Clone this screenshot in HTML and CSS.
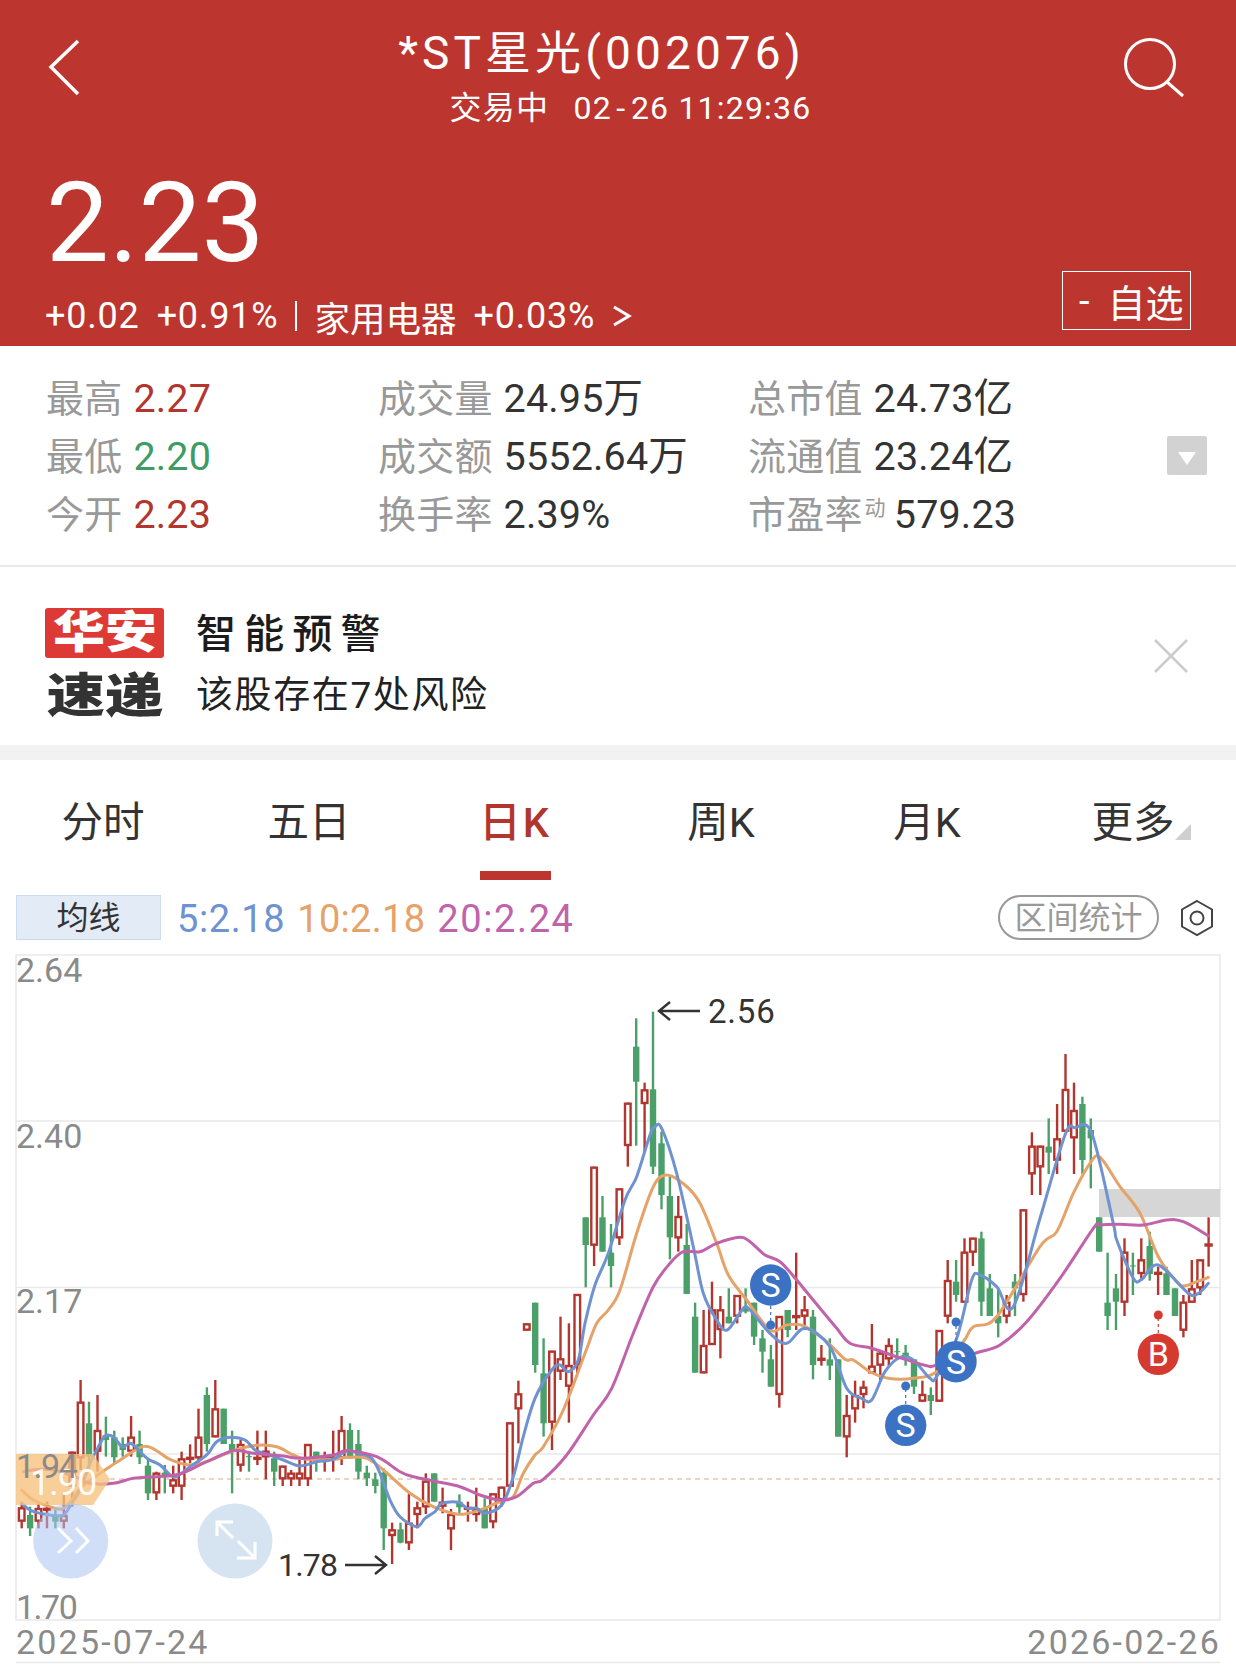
FILE: index.html
```html
<!DOCTYPE html>
<html lang="zh-CN">
<head>
<meta charset="utf-8">
<title>*ST星光(002076)</title>
<link rel="stylesheet" href="styles.css">
</head>
<body>
<main class="page">
  <header class="quote">
    <div class="nav">
      <svg class="nav-back" viewBox="0 0 40 60"><path d="M33 3 L6 29 L33 56"/></svg>
      <div class="nav-titles">
        <div class="stock-name">*ST星光(002076)</div>
        <div class="stock-status">交易中&nbsp;&nbsp;<span class="stock-time">02<span class="dash">-</span>26 11:29:36</span></div>
      </div>
      <svg class="nav-search" viewBox="0 0 72 64"><circle cx="31" cy="28" r="24.5"/><path d="M48 46 L64 60"/></svg>
    </div>
    <div class="price-row">
      <div class="price-block">
        <div class="price">2.23</div>
        <div class="change">
          <span>+0.02</span><span>+0.91%</span><span class="pipe"></span><span class="sector">家用电器</span><span>+0.03%</span>
          <svg class="change-more" viewBox="0 0 20 24"><path d="M2 3 L17 12 L2 21"/></svg>
        </div>
      </div>
      <button class="watch"><span class="watch-minus">-</span>自选</button>
    </div>
  </header>

  <section class="stats">
    <div class="stats-grid">
      <div class="stat"><span class="stat-label">最高</span><span class="up">2.27</span></div>
      <div class="stat"><span class="stat-label">成交量</span><span>24.95万</span></div>
      <div class="stat"><span class="stat-label">总市值</span><span>24.73亿</span></div>
      <div class="stat"><span class="stat-label">最低</span><span class="down">2.20</span></div>
      <div class="stat"><span class="stat-label">成交额</span><span>5552.64万</span></div>
      <div class="stat"><span class="stat-label">流通值</span><span>23.24亿</span></div>
      <div class="stat"><span class="stat-label">今开</span><span class="up">2.23</span></div>
      <div class="stat"><span class="stat-label">换手率</span><span>2.39%</span></div>
      <div class="stat"><span class="stat-label">市盈率<sup class="stat-sup">动</sup></span><span>579.23</span></div>
    </div>
    <div class="stats-toggle"><svg viewBox="0 0 40 39"><path d="M11 16 H29 L20 29 Z"/></svg></div>
  </section>

  <section class="alert">
    <div class="alert-logo">
      <div class="logo-top"><span class="logo-word">华安</span></div>
      <div class="logo-bottom"><span class="logo-word">速递</span></div>
    </div>
    <div class="alert-text">
      <div class="alert-title">智能预警</div>
      <div class="alert-body">该股存在7处风险</div>
    </div>
    <svg class="alert-close" viewBox="0 0 36 36"><path d="M2 2 L34 34 M34 2 L2 34"/></svg>
  </section>

  <div class="band"></div>

  <nav class="tabs">
    <div class="tab"><span class="tab-label">分时</span></div>
    <div class="tab"><span class="tab-label">五日</span></div>
    <div class="tab tab-active"><span class="tab-label">日K</span></div>
    <div class="tab"><span class="tab-label">周K</span></div>
    <div class="tab"><span class="tab-label">月K</span></div>
    <div class="tab"><span class="tab-label tab-more">更多</span></div>
  </nav>

  <div class="ma-row">
    <div class="ma-switch">均线</div>
    <div class="ma-legend">
      <span class="ma5">5:2.18</span><span class="ma10">10:2.18</span><span class="ma20">20:2.24</span>
    </div>
    <div class="range-pill">区间统计</div>
    <svg class="ma-gear" viewBox="0 0 34 38"><path d="M17 2 L32 10.5 V27.5 L17 36 L2 27.5 V10.5 Z"/><circle cx="17" cy="19" r="6.5"/></svg>
  </div>

  <svg id="kline" class="kline" viewBox="0 940 1236 724" width="1236" height="724">
    <path class="frame" d="M16 955 H1220 V1620 H16 Z M16 1121 H1220 M16 1287.5 H1220 M16 1454 H1220 M16 1662.5 H1220"/>
    <rect class="zone" x="1099" y="1189" width="121" height="28"/>
    <path class="prev-close" d="M110 1479 H1220"/>
    <g id="candles"></g>
    <g id="averages"></g>
    <path class="price-tag" d="M16 1454 H93 L110 1479.5 L93 1505 H16 Z"/>

    <g class="float-btn">
      <circle class="float-next" cx="70.7" cy="1541" r="37.5"/>
      <path d="M58 1528 L71 1541 L58 1553 M76 1528 L88 1541 L76 1553"/>
      <circle class="float-zoom" cx="235" cy="1541" r="37.5"/>
      <path d="M217 1536 V1522 H233 M217 1522 L233 1538 M255 1542 V1558 H237 M255 1558 L238 1541"/>
    </g>

    <text class="tag-value" x="30" y="1495">1.90</text>
    <g class="axis">
      <text x="16" y="982">2.64</text>
      <text x="16" y="1148">2.40</text>
      <text x="16" y="1313">2.17</text>
      <text class="axis-narrow" x="16" y="1478">1.94</text>
      <text class="axis-narrow" x="16" y="1619">1.70</text>
      <text class="axis-date" x="16" y="1654">2025-07-24</text>
      <text class="axis-date axis-end" x="1221" y="1654">2026-02-26</text>
    </g>

    <g class="extreme">
      <text x="708" y="1023">2.56</text>
      <path d="M700 1011 H659 M670 1002 L659 1011 L670 1020"/>
      <text class="extreme-low" x="278" y="1576">1.78</text>
      <path d="M345 1565 H386 M375 1556 L386 1565 L375 1574"/>
    </g>

    <g class="signal signal-sell">
      <path class="signal-stem" d="M770.7 1306 V1325 M905.7 1404 V1386 M956 1341 V1322"/>
      <circle class="signal-dot" cx="770.7" cy="1325" r="4.5"/>
      <circle class="signal-dot" cx="905.7" cy="1386" r="4.5"/>
      <circle class="signal-dot" cx="956" cy="1322" r="4.5"/>
      <circle cx="770.7" cy="1285" r="20.7"/><text x="770.7" y="1297">S</text>
      <circle cx="905.7" cy="1425.3" r="20.7"/><text x="905.7" y="1437">S</text>
      <circle cx="956" cy="1361.7" r="20.7"/><text x="956" y="1373.5">S</text>
    </g>
    <g class="signal signal-buy">
      <path class="signal-stem" d="M1158.3 1333 V1315"/>
      <circle class="signal-dot" cx="1158.3" cy="1315" r="4.5"/>
      <circle cx="1158.3" cy="1354.3" r="20.7"/><text x="1158.3" y="1366">B</text>
    </g>
  </svg>
</main>
<script src="chart.js"></script>
</body>
</html>
```
FILE: styles.css
```css
* { box-sizing: border-box; }

html, body { margin: 0; padding: 0; background: #fff; }

body {
  font-family: Roboto, "Noto Sans CJK SC", sans-serif;
  color: #333;
}

.page { width: 1236px; height: 1664px; overflow: hidden; }

/* quote header */
.quote {
  height: 346px;
  padding: 0 45px 0 45px;
  background: #bc352e;
  color: #fff;
}

.nav { display: flex; height: 130px; }

.nav-back { width: 40px; height: 60px; margin-top: 38px; flex: none; }
.nav-back path, .nav-search path, .nav-search circle, .change-more path {
  fill: none;
  stroke: #fff;
  stroke-width: 3.5;
}
.nav-search path, .nav-search circle { stroke-width: 3; }
.nav-search { width: 72px; height: 64px; margin-top: 36px; flex: none; }

.nav-titles { flex: 1; text-align: center; padding-top: 23px; padding-right: 1px; }
.stock-name { font-size: 46px; line-height: 60px; letter-spacing: 4.1px; }
.stock-status { font-size: 32px; line-height: 40px; margin-top: 5px; padding-left: 58px; letter-spacing: 1.2px; }
.stock-time { margin-left: 6px; }
.dash { margin: 0 4.5px; }

.price-row { display: flex; justify-content: space-between; }
.price { font-size: 112px; line-height: 110px; margin-top: 38px; margin-left: 1px; }

.change {
  display: flex;
  align-items: center;
  gap: 17px;
  height: 44px;
  margin-top: 16px;
  font-size: 36px;
  letter-spacing: .8px;
}
.pipe { width: 2px; height: 30px; background: #fff; }
.sector { font-size: 35.5px; letter-spacing: 0; }
.change-more { width: 20px; height: 24px; }
.change-more path { stroke-width: 3; }

.watch {
  align-self: flex-end;
  width: 129px;
  height: 59px;
  margin-bottom: 8px;
  padding: 0 0 0 16px;
  display: flex;
  align-items: center;
  border: 1px solid #fff;
  background: none;
  color: #fff;
  font-family: inherit;
  font-size: 38px;
}
.watch-minus { margin-right: 18px; }

/* daily figures */
.stats {
  display: flex;
  align-items: center;
  padding: 24px 29px 21px 46px;
  border-bottom: 2px solid #e9e9e9;
}

.stats-grid {
  flex: 1;
  display: grid;
  grid-template-columns: 332px 370px 1fr;
  grid-auto-rows: 58px;
}

.stat { display: flex; align-items: center; gap: 11px; font-size: 39.5px; letter-spacing: .15px; line-height: 58px; white-space: nowrap; }
.stat-label { color: #999; font-size: 38px; letter-spacing: .2px; }
.stat-sup { font-size: 21px; vertical-align: 13px; line-height: 0; margin-left: 2px; margin-right: -3px; }
.up { color: #b2362e; }
.down { color: #3d9b63; }

.stats-toggle { width: 40px; height: 39px; flex: none; margin-bottom: 4px; border-radius: 2px; background: #d2d2d2; }
.stats-toggle svg { display: block; }
.stats-toggle path { fill: #fff; }

/* risk notice */
.alert { display: flex; height: 178px; padding: 41px 47px 0 45px; }

.alert-logo { width: 119px; flex: none; }
.logo-top {
  height: 50px;
  border-radius: 3px;
  background: #dd3a36;
  color: #fff;
  font-size: 44px;
  line-height: 50px;
  font-weight: 900;
  text-align: center;
}
.logo-bottom {
  margin-top: 13px;
  color: #333;
  font-size: 47px;
  line-height: 50px;
  font-weight: 900;
  text-align: center;
}
.logo-word { display: inline-block; transform: scaleX(1.18); }
.logo-bottom .logo-word { transform: scaleX(1.24); }

.alert-text { flex: 1; margin-left: 32px; }
.alert-title { font-size: 40px; line-height: 52px; margin-top: 1px; letter-spacing: 8.2px; font-weight: 500; color: #1c1c1c; }
.alert-body { font-size: 37px; line-height: 52px; margin-top: 9px; letter-spacing: 1.6px; color: #222; }

.alert-close { width: 36px; height: 36px; margin-top: 30px; flex: none; }
.alert-close path { fill: none; stroke: #ccc; stroke-width: 2.5; }

.band { height: 15px; background: #f2f2f2; }

/* period tabs */
.tabs { display: grid; grid-template-columns: repeat(6, 1fr); height: 135px; padding-top: 35px; }

.tab { display: flex; flex-direction: column; align-items: center; color: #333; font-size: 41.5px; line-height: 56px; }
.tab-active { color: #b2362e; font-weight: 500; letter-spacing: 2px; }
.tab-active::after { content: ""; width: 71px; height: 9px; margin-top: 20px; background: #bc352e; }
.tab-more { position: relative; }
.tab-more::after {
  content: "";
  position: absolute;
  right: -16px;
  bottom: 11px;
  border-style: solid;
  border-width: 0 0 16px 16px;
  border-color: transparent transparent #cfcfcf transparent;
}

/* moving average legend */
.ma-row { display: flex; align-items: center; height: 45px; padding: 0 22px 0 16px; }

.ma-switch {
  width: 145px;
  height: 45px;
  border: 1px solid #cfdcee;
  background: #e3ebf7;
  color: #333;
  font-size: 32px;
  line-height: 45px;
  text-align: center;
}

.ma-legend { display: flex; gap: 12px; margin-left: 16px; padding-top: 2px; font-size: 38px; letter-spacing: .6px; }
.ma5 { color: #6f92d0; }
.ma10 { color: #e5a269; letter-spacing: .3px; }
.ma20 { color: #c163aa; letter-spacing: 1.6px; }

.range-pill {
  width: 161px;
  height: 45px;
  margin-left: auto;
  border: 2px solid #999;
  border-radius: 23px;
  color: #999;
  font-size: 32px;
  line-height: 43px;
  text-align: center;
}

.ma-gear { width: 34px; height: 38px; margin-left: 21px; flex: none; }
.ma-gear path, .ma-gear circle { fill: none; stroke: #444; stroke-width: 2; }

/* candlestick chart */
.kline { display: block; }

.frame { fill: none; stroke: #e9e9e9; stroke-width: 1.6; }
.zone { fill: #d6d6d6; }
.prev-close { fill: none; stroke: #e2cba8; stroke-width: 1.4; stroke-dasharray: 5 4; }
.price-tag { fill: #f6c27f; fill-opacity: .8; }

.wick-up, .wick-down { stroke-width: 2.4; fill: none; }
.wick-up { stroke: #b2362e; }
.wick-down { stroke: #4ba06a; }
.body-up { fill: #fff; stroke: #b2362e; stroke-width: 2.4; }
.body-down { fill: #4ba06a; }

.line { fill: none; stroke-width: 3; stroke-linejoin: round; stroke-linecap: round; }
.line-ma5 { stroke: #6f92d0; }
.line-ma10 { stroke: #e5a269; }
.line-ma20 { stroke: #c163aa; }

.float-btn path { fill: none; stroke: #fff; stroke-width: 3; }
.float-next { fill: #a9c2f0; fill-opacity: .55; }
.float-zoom { fill: #b4cde6; fill-opacity: .55; }

.axis text { font-size: 34px; fill: #8a8a8a; }
.axis .axis-narrow { letter-spacing: -1.5px; }
.axis .axis-date { font-size: 34px; letter-spacing: 2.2px; }
.axis .axis-end { text-anchor: end; }
.tag-value { font-size: 36px; letter-spacing: -1px; fill: #fff; fill-opacity: .95; }

.extreme text { font-size: 33px; letter-spacing: .8px; fill: #333; }
.extreme .extreme-low { font-size: 32px; letter-spacing: -.8px; }
.extreme path { fill: none; stroke: #333; stroke-width: 2.4; }

.signal text { font-size: 34px; fill: #fff; text-anchor: middle; }
.signal-sell circle { fill: #3b72c4; }
.signal-buy circle { fill: #d53a30; }
.signal-stem { fill: none; stroke-width: 1.2; stroke-dasharray: 3 3; }
.signal-sell .signal-stem { stroke: #3b72c4; }
.signal-buy .signal-stem { stroke: #d53a30; }
```
FILE: chart.js
```js
// Daily candlesticks and moving averages for 002076.
// A candle row is [kind, high, top, bottom, low]; each block of rows is
// measured in third-pixels down from its base line.
var STEP = 8.418, FIRST_X = 21.7;

var blocks = [
  [1300, [
    ['r',605,622,665,685],['g',620,645,685,708],['r',610,624,665,685],['r',605,628,628,685],
    ['g',630,645,665,685],['r',580,645,665,685],['r',455,455,560,620],['r',240,305,475,510],
    ['g',305,370,470,510],['r',285,390,455,515],['g',350,405,420,470],['g',392,412,472,492],
    ['g',412,432,450,470],['r',348,410,455,470],['g',392,432,472,492],['g',475,497,580,600],
    ['r',515,518,580,600],['g',495,518,530,580],['r',497,538,560,580],['r',455,475,560,600],
    ['r',433,475,475,490],['r',326,410,475,490],['g',262,285,432,455],['r',240,325,412,412],
    ['g',326,326,432,432],['g',392,432,450,580],['r',420,432,497,515],['g',455,470,470,515],
    ['r',392,475,475,495],['r',392,452,472,538],['g',455,475,515,558],['r',497,497,538,558],
    ['r',510,518,538,558],['r',480,518,538,558],['r',432,432,538,558],['g',455,455,475,515],
    ['r',455,472,472,515],['r',392,475,475,515],['r',348,390,475,495],['g',370,390,475,475],
    ['g',390,432,515,538],['g',497,518,535,558],['g',518,538,558,580],['g',505,518,685,750],
    ['r',668,688,708,792],['g',668,688,728,730],['r',582,668,730,750],['r',605,622,645,685]
  ]],
  [1360, [
    ['r',340,362,442,462],['g',340,340,425,425],['r',383,425,440,460],['r',447,462,508,570],
    ['g',403,425,442,465],['r',425,445,445,485],['r',383,445,465,485],['g',415,445,505,505],
    ['r',400,400,487,505],['r',380,380,420,440],['r',187,187,380,380],['r',62,100,148,250]
  ]],
  [980, [
    ['r',1030,1030,1052,1052],['g',968,968,1155,1178],['g',1075,1180,1330,1370],['r',1112,1112,1328,1410],
    ['r',1010,1135,1175,1200],['r',1030,1155,1220,1328],['r',942,942,1155,1180],['g',712,712,795,922],
    ['r',560,560,797,858],['g',648,712,815,815],['g',732,818,858,922],['r',625,625,775,795],
    ['r',368,368,498,560],['g',115,200,305,497],['r',308,328,372,518],['g',95,328,560,582],
    ['g',455,490,645,688],['g',590,648,772,838],['r',648,708,775,815],['g',732,795,942,942],
    ['g',968,1010,1178,1178],['r',990,1095,1180,1180],['r',905,988,1095,1095],['r',948,988,1050,1135],
    ['g',925,1010,1030,1030],['r',945,945,1010,1030],['g',925,985,995,1000],['g',968,968,1070,1095],
    ['g',1050,1075,1115,1178],['g',1095,1138,1220,1220],['r',1008,1008,1245,1283],['g',990,990,1050,1072],
    ['r',818,1010,1010,1050],['r',948,988,1010,1050],['g',990,1010,1155,1198]
  ]],
  [1200, [
    ['r',435,478,478,497],['g',415,478,497,540],['g',478,478,710,710],['r',585,645,712,772],
    ['r',542,585,628,668],['r',542,560,585,625],['r',372,497,520,520],['r',455,458,497,540],
    ['r',415,435,478,497],['g',415,455,458,480],['g',435,458,470,497],['g',478,478,560,582],
    ['r',542,582,605,605],['g',562,585,603,645],['r',390,390,605,605]
  ]],
  [1030, [
    ['r',690,750,860,880],['g',690,755,795,815],['r',625,665,818,818],['r',623,623,668,708],
    ['g',605,625,815,858],['g',732,775,858,858],['g',775,858,880,922],['r',795,815,860,880],
    ['g',732,755,775,858],['r',538,538,795,815],['r',307,347,433,495],['r',347,347,412,495],
    ['g',265,350,368,432],['r',222,325,392,432],['r',72,177,305,305],['r',158,240,325,432],
    ['g',200,222,390,432],['g',265,300,325,475],['g',562,562,665,665],['g',668,818,858,900],
    ['g',732,775,815,900],['r',625,665,818,858],['g',668,708,708,795],['r',625,688,732,752],
    ['g',605,648,732,752],['r',710,730,730,795],['g',710,730,795,795],['g',775,775,858,858],
    ['r',795,815,902,922],['r',690,775,818,818],['r',688,688,775,795],['r',562,645,645,710]
  ]]
];

// Average lines, each as pieces of [x, y] in third-pixels from a local origin.
function trace(pieces) {
  var out = [];
  pieces.forEach(function (piece) {
    piece[2].forEach(function (p) {
      out.push([piece[0] + p[0] / 3, piece[1] + p[1] / 3]);
    });
  });
  return out;
}

var ma5 = trace([
  [0, 1300, [[65,610],[90,630],[120,640],[150,645],[190,645],[215,610],[240,570],[270,490],[290,450],[315,408],[340,410],[367,440],[392,430],[420,455],[445,478],[480,495],[518,530],[545,520],[570,500],[600,480],[625,460],[650,425],[690,412],[735,420],[765,450],[800,462],[850,480],[900,498],[950,485],[1000,478],[1040,452],[1075,460],[1115,475],[1140,520],[1170,600],[1200,650],[1250,680]]],
  [380, 1360, [[135,475],[165,455],[185,430],[235,427],[262,445],[290,445],[315,460],[365,435],[400,350],[430,230],[465,115]]],
  [400, 980, [[455,1170],[480,1155],[505,1175],[535,1140],[555,1030],[585,915],[625,820],[675,660],[710,590],[750,465],[765,440],[785,445],[830,580],[880,800],[910,940],[950,1020],[982,1050],[1030,985],[1050,990],[1110,1060],[1160,1090],[1215,1045]]],
  [680, 1200, [[450,440],[500,565],[545,595],[575,600],[615,515],[660,472],[700,480],[750,535],[770,530]]],
  [800, 1030, [[470,925],[515,750],[540,735],[590,770],[640,830],[720,565],[795,315],[825,293],[875,310],[940,580],[950,630],[1000,745],[1025,748],[1075,705],[1165,790],[1195,790],[1225,760]]]
]);

var ma10 = trace([
  [0, 1300, [[65,570],[100,600],[165,625],[190,625],[215,600],[240,565],[300,520],[345,490],[415,445],[445,440],[475,455],[510,478],[570,495],[620,485],[700,452],[770,436],[830,440],[880,465],[920,478],[1000,478],[1040,472],[1100,475],[1150,510],[1230,580]]],
  [380, 1360, [[160,440],[235,463],[300,450],[370,420],[400,410],[430,340],[465,285],[490,260],[550,150]]],
  [400, 980, [[555,1120],[590,1030],[625,990],[660,930],[710,760],[760,620],[800,585],[855,615],[900,670],[950,790],[985,885],[1040,960],[1110,1050],[1160,1035],[1210,1037]]],
  [680, 1200, [[440,425],[495,478],[520,480],[570,515],[625,535],[700,535],[770,515]]],
  [800, 1030, [[490,935],[520,890],[590,860],[720,650],[770,605],[820,490],[870,400],[900,382],[960,470],[1020,550],[1075,680],[1125,750],[1150,768],[1190,755],[1225,742]]]
]);

var ma20 = trace([
  [0, 1300, [[70,515],[120,508],[170,512],[225,530],[270,550],[340,550],[400,535],[470,530],[540,522],[620,485],[700,452],[760,460],[850,468],[900,475],[1000,465],[1040,452],[1130,470],[1200,515]]],
  [380, 1360, [[100,350],[170,365],[240,380],[300,405],[360,420],[410,410],[460,370],[490,358],[560,285],[640,165]]],
  [400, 980, [[635,1225],[700,1060],[760,920],[810,850],[850,815],[900,815],[950,790],[1020,772],[1050,785],[1095,825]]],
  [680, 1200, [[300,185],[350,240],[420,325],[470,385],[510,430],[575,445],[650,470],[740,497],[770,495]]],
  [800, 1030, [[530,968],[600,945],[680,875],[780,745],[880,595],[900,585],[960,583],[1030,585],[1100,570],[1150,575],[1225,617]]]
]);

var SVG_NS = 'http://www.w3.org/2000/svg';

function add(parent, tag, attrs) {
  var el = document.createElementNS(SVG_NS, tag);
  Object.keys(attrs).forEach(function (k) { el.setAttribute(k, attrs[k]); });
  parent.appendChild(el);
  return el;
}

function drawCandle(group, x, kind, hi, top, bottom, lo) {
  var up = kind === 'r';
  add(group, 'path', {
    'class': up ? 'wick-up' : 'wick-down',
    d: 'M' + x + ' ' + hi + ' V' + lo
  });
  var cx = parseFloat(x);
  if (bottom - top < 2) {
    add(group, 'rect', {
      'class': up ? 'body-up' : 'body-down',
      x: cx - 3, y: top - 0.5, width: 6, height: 1
    });
  } else if (up) {
    add(group, 'rect', {
      'class': 'body-up',
      x: cx - 2.8, y: top + 1, width: 5.6, height: bottom - top - 2
    });
  } else {
    add(group, 'rect', {
      'class': 'body-down',
      x: cx - 3.2, y: top, width: 6.4, height: bottom - top
    });
  }
}

// Catmull-Rom through the samples so the averages read as smooth curves.
function smoothPath(points) {
  var d = 'M' + points[0][0].toFixed(1) + ' ' + points[0][1].toFixed(1);
  for (var i = 0; i < points.length - 1; i++) {
    var p0 = points[Math.max(i - 1, 0)];
    var p1 = points[i];
    var p2 = points[i + 1];
    var p3 = points[Math.min(i + 2, points.length - 1)];
    var c1x = p1[0] + (p2[0] - p0[0]) / 6;
    var c1y = p1[1] + (p2[1] - p0[1]) / 6;
    var c2x = p2[0] - (p3[0] - p1[0]) / 6;
    var c2y = p2[1] - (p3[1] - p1[1]) / 6;
    d += ' C' + c1x.toFixed(1) + ' ' + c1y.toFixed(1) + ' ' +
         c2x.toFixed(1) + ' ' + c2y.toFixed(1) + ' ' +
         p2[0].toFixed(1) + ' ' + p2[1].toFixed(1);
  }
  return d;
}

var candles = document.getElementById('candles');
var index = 0;
blocks.forEach(function (block) {
  var base = block[0];
  block[1].forEach(function (row) {
    var x = FIRST_X + STEP * index;
    drawCandle(candles, x.toFixed(1), row[0],
      base + row[1] / 3, base + row[2] / 3, base + row[3] / 3, base + row[4] / 3);
    index++;
  });
});

var averages = document.getElementById('averages');
add(averages, 'path', { 'class': 'line line-ma10', d: smoothPath(ma10) });
add(averages, 'path', { 'class': 'line line-ma5', d: smoothPath(ma5) });
add(averages, 'path', { 'class': 'line line-ma20', d: smoothPath(ma20) });
```
